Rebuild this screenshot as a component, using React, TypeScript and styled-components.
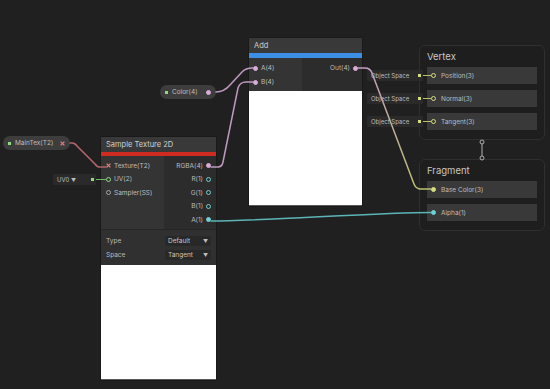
import { ReactElement, ReactNode } from 'react';
import styled, { createGlobalStyle } from 'styled-components';

const PINK = '#d7acd6';
const CYAN = '#6fd0d3';
const GREEN = '#8fdc7f';
const OLIVE = '#d3dc80';
const RED = '#e07c7c';
const GRAY = '#a5a5a5';

const GlobalStyle = createGlobalStyle`
  html, body {
    margin: 0;
    background: #202020;
  }
  body {
    font-family: Inter, 'Liberation Sans', sans-serif;
  }
`;

const Canvas = styled.div`
  position: relative;
  width: 550px;
  height: 389px;
  overflow: hidden;
  background: #202020;
`;

const Wires = styled.svg`
  position: absolute;
  left: 0;
  top: 0;
  z-index: 2;
  pointer-events: none;
`;

const Node = styled.div<{ $x: number; $y: number; $w: number }>`
  position: absolute;
  left: ${(p) => p.$x}px;
  top: ${(p) => p.$y}px;
  width: ${(p) => p.$w}px;
  display: flex;
  flex-direction: column;
  background: #2e2e2e;
  border-radius: 2px;
  box-shadow: 0 0 0 1px #191919;
`;

const NodeTitle = styled.div`
  height: 15px;
  display: flex;
  align-items: center;
  padding: 0 5px;
  background: #393939;
  color: #d0d0d0;
  font-size: 7.5px;
`;

const Accent = styled.div<{ $color: string; $h: number }>`
  height: ${(p) => p.$h}px;
  background: ${(p) => p.$color};
`;

const Ports = styled.div<{ $inW: number }>`
  display: grid;
  grid-template-columns: ${(p) => p.$inW}px 1fr;
`;

const PortColumn = styled.div<{ $out?: boolean }>`
  display: flex;
  flex-direction: column;
  padding: 3px 0 2px;
  background: ${(p) => (p.$out ? '#2c2c2c' : '#343434')};
  align-items: ${(p) => (p.$out ? 'flex-end' : 'flex-start')};
`;

const PortRow = styled.div<{ $h: number; $out?: boolean; $pad: number }>`
  height: ${(p) => p.$h}px;
  display: flex;
  align-items: center;
  gap: 3px;
  flex-direction: ${(p) => (p.$out ? 'row-reverse' : 'row')};
  padding: 0 ${(p) => p.$pad}px;
  font-size: 6.5px;
  color: #bdbdbd;
  white-space: nowrap;
`;

const Port = styled.span<{ $color: string; $filled?: boolean }>`
  flex: none;
  width: 5px;
  height: 5px;
  box-sizing: border-box;
  border-radius: 50%;
  border: 1px solid ${(p) => p.$color};
  background: ${(p) => (p.$filled ? p.$color : 'transparent')};
`;

const Settings = styled.div`
  display: flex;
  flex-direction: column;
  padding: 4px 5px 3px;
  background: #303030;
  border-top: 1px solid #262626;
`;

const SettingRow = styled.div`
  height: 14px;
  display: flex;
  align-items: center;
  justify-content: space-between;
  font-size: 6.5px;
  color: #bdbdbd;
`;

const Select = styled.div`
  width: 46px;
  height: 10px;
  box-sizing: border-box;
  padding: 0 3px;
  display: flex;
  align-items: center;
  justify-content: space-between;
  background: #282828;
  border-radius: 2px;
  color: #c6c6c6;
  font-size: 6.5px;
`;

const Caret = styled.span`
  font-size: 5px;
  color: #bdbdbd;
`;

const Preview = styled.div<{ $h: number }>`
  height: ${(p) => p.$h}px;
  background: #ffffff;
  border-bottom: 1px solid #5a5a5a;
`;

const Pill = styled.div<{ $x: number; $y: number; $w: number }>`
  position: absolute;
  left: ${(p) => p.$x}px;
  top: ${(p) => p.$y}px;
  width: ${(p) => p.$w}px;
  height: 14px;
  box-sizing: border-box;
  padding: 0 5px;
  display: flex;
  align-items: center;
  gap: 4px;
  border-radius: 7px;
  background: #3d3d3d;
  font-size: 6.5px;
  color: #bdbdbd;
`;

const PillLabel = styled.span`
  flex: 1;
  white-space: nowrap;
`;

const PropDot = styled.span<{ $color: string }>`
  flex: none;
  width: 3px;
  height: 3px;
  background: ${(p) => p.$color};
`;

const Field = styled.div<{ $x?: number; $y?: number }>`
  position: absolute;
  display: flex;
  align-items: center;
  ${(p) =>
    p.$x !== undefined
      ? `left: ${p.$x}px; top: ${p.$y}px;`
      : 'right: calc(100% - 4px); top: 3px;'}
`;

const FieldBox = styled.div<{ $w: number }>`
  width: ${(p) => p.$w}px;
  height: 11px;
  box-sizing: border-box;
  padding: 0 2px 0 4px;
  display: flex;
  align-items: center;
  gap: 2px;
  background: #2a2a2a;
  border-radius: 1px;
  color: #bdbdbd;
  font-size: 6px;
  white-space: nowrap;
`;

const FieldText = styled.span`
  flex: 1;
`;

const Link = styled.span<{ $w: number; $color: string }>`
  width: ${(p) => p.$w}px;
  height: 1.5px;
  background: ${(p) => p.$color};
`;

const Stack = styled.div`
  position: absolute;
  left: 419px;
  top: 45px;
  width: 126px;
  display: flex;
  flex-direction: column;
  gap: 19px;
`;

const Context = styled.div`
  display: flex;
  flex-direction: column;
  gap: 6px;
  padding: 5px 7px 9px;
  border: 1px solid #2f2f2f;
  border-radius: 6px;
  background: #1e1e1e;
`;

const ContextTitle = styled.div`
  height: 12px;
  line-height: 12px;
  margin-bottom: -2px;
  font-size: 9.5px;
  color: #c8c8c8;
`;

const Block = styled.div`
  position: relative;
  height: 17px;
  display: flex;
  align-items: center;
  gap: 5px;
  padding-left: 4px;
  background: #393939;
  font-size: 6.5px;
  color: #bdbdbd;
`;

function TexPort({ color }: { color: string }): ReactElement {
  return (
    <svg width="5" height="5" viewBox="0 0 5 5" style={{ flex: 'none' }}>
      <path d="M0.6 0.6L4.4 4.4M4.4 0.6L0.6 4.4" stroke={color} strokeWidth="1.3" />
    </svg>
  );
}

function InlineInput({ label, caret, width }: { label: string; caret?: boolean; width: number }): ReactElement {
  return (
    <FieldBox $w={width}>
      <FieldText>
        {label} {caret && <Caret>▼</Caret>}
      </FieldText>
      <PropDot $color={caret ? GREEN : OLIVE} />
    </FieldBox>
  );
}

function VertexBlock({ label }: { label: string }): ReactElement {
  return (
    <Block>
      <Field>
        <InlineInput label="Object Space" width={56} />
        <Link $w={8} $color="#b7c26a" />
      </Field>
      <Port $color={OLIVE} />
      {label}
    </Block>
  );
}

function Row({ h, out, pad, children }: { h: number; out?: boolean; pad: number; children: ReactNode }): ReactElement {
  return (
    <PortRow $h={h} $out={out} $pad={pad}>
      {children}
    </PortRow>
  );
}

export default function App(): ReactElement {
  return (
    <>
      <GlobalStyle />
      <Canvas>
        <Node $x={249} $y={38} $w={113}>
          <NodeTitle>Add</NodeTitle>
          <Accent $color="#3d8ee6" $h={5} />
          <Ports $inW={53}>
            <PortColumn>
              <Row h={14} pad={4}>
                <Port $color={PINK} $filled />A(4)
              </Row>
              <Row h={14} pad={4}>
                <Port $color={PINK} $filled />B(4)
              </Row>
            </PortColumn>
            <PortColumn $out>
              <Row h={14} pad={4} out>
                <Port $color={PINK} $filled />Out(4)
              </Row>
            </PortColumn>
          </Ports>
          <Preview $h={114} />
        </Node>

        <Node $x={101} $y={137} $w={115}>
          <NodeTitle>Sample Texture 2D</NodeTitle>
          <Accent $color="#cf2b20" $h={4} />
          <Ports $inW={63}>
            <PortColumn>
              <Row h={13.5} pad={5}>
                <TexPort color={RED} />Texture(T2)
              </Row>
              <Row h={13.5} pad={5}>
                <Port $color={GREEN} />UV(2)
              </Row>
              <Row h={13.5} pad={5}>
                <Port $color={GRAY} />Sampler(SS)
              </Row>
            </PortColumn>
            <PortColumn $out>
              <Row h={13.5} pad={5} out>
                <Port $color={PINK} $filled />RGBA(4)
              </Row>
              <Row h={13.5} pad={5} out>
                <Port $color={CYAN} />R(1)
              </Row>
              <Row h={13.5} pad={5} out>
                <Port $color={CYAN} />G(1)
              </Row>
              <Row h={13.5} pad={5} out>
                <Port $color={CYAN} />B(1)
              </Row>
              <Row h={13.5} pad={5} out>
                <Port $color={CYAN} $filled />A(1)
              </Row>
            </PortColumn>
          </Ports>
          <Settings>
            <SettingRow>
              Type
              <Select>
                Default <Caret>▼</Caret>
              </Select>
            </SettingRow>
            <SettingRow>
              Space
              <Select>
                Tangent <Caret>▼</Caret>
              </Select>
            </SettingRow>
          </Settings>
          <Preview $h={114} />
        </Node>

        <Pill $x={3} $y={136} $w={67}>
          <PropDot $color={GREEN} />
          <PillLabel>MainTex(T2)</PillLabel>
          <TexPort color={RED} />
        </Pill>

        <Pill $x={160} $y={85} $w={56}>
          <PropDot $color={GREEN} />
          <PillLabel>Color(4)</PillLabel>
          <Port $color={PINK} $filled />
        </Pill>

        <Field $x={53} $y={174}>
          <InlineInput label="UV0" caret width={43} />
          <Link $w={10} $color="#6fb863" />
        </Field>

        <Stack>
          <Context>
            <ContextTitle>Vertex</ContextTitle>
            <VertexBlock label="Position(3)" />
            <VertexBlock label="Normal(3)" />
            <VertexBlock label="Tangent(3)" />
          </Context>
          <Context>
            <ContextTitle>Fragment</ContextTitle>
            <Block>
              <Port $color={OLIVE} $filled />
              Base Color(3)
            </Block>
            <Block>
              <Port $color={CYAN} $filled />
              Alpha(1)
            </Block>
          </Context>
        </Stack>

        <Wires width="550" height="389" viewBox="0 0 550 389">
          <defs>
            <linearGradient id="outWire" gradientUnits="userSpaceOnUse" x1="358" y1="68" x2="431" y2="189">
              <stop offset="0" stopColor="#c29ec2" />
              <stop offset="1" stopColor="#bcc070" />
            </linearGradient>
          </defs>
          <g fill="none" strokeWidth="1.5" strokeLinecap="round">
            <path d="M70 143 H72 Q75 143 77 146 L95 164 Q97 167 100 167 H106" stroke="#b0666a" />
            <path d="M216 92 Q224 92 230 85 L242 72 Q246 68 252 68 H253" stroke="#bf9abf" />
            <path d="M211 167 H218 Q222 167 223 162 L238 88 Q240 82 246 82 H253" stroke="#bf9abf" />
            <path d="M358 68 H365 Q370 68 372 73 L414 184 Q416 189 421 189 H431" stroke="url(#outWire)" />
            <path d="M211 221 C 260 221 380 212.5 431 212.5" stroke="#5bb5b7" />
          </g>
          <g fill="none" stroke="#b0b0b0" strokeWidth="1">
            <circle cx="482" cy="142" r="2" />
            <circle cx="482" cy="158" r="2" />
            <path d="M482 144 V156" />
          </g>
        </Wires>
      </Canvas>
    </>
  );
}
